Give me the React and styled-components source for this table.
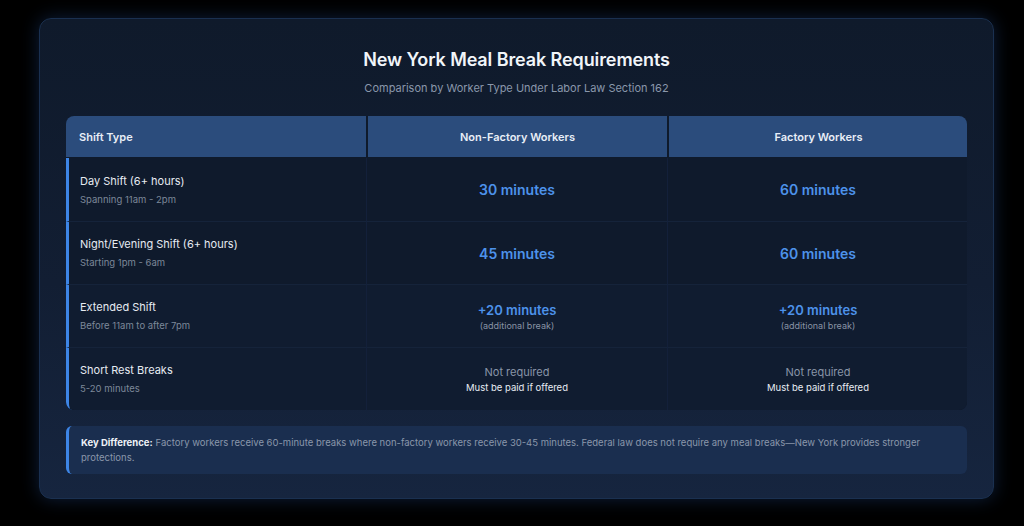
import React from "react";
import styled, { createGlobalStyle } from "styled-components";

const Global = createGlobalStyle`
  html, body { margin: 0; padding: 0; background: #000; }
  body { font-family: Inter, "Noto Sans", "Liberation Sans", sans-serif; -webkit-font-smoothing: antialiased; }
`;

const Page = styled.div`
  width: 1024px;
  height: 526px;
  background: #000;
  padding: 18px 30px 0 39px;
  box-sizing: border-box;
`;

const Card = styled.div`
  width: 955px;
  height: 481px;
  box-sizing: border-box;
  border-radius: 12px;
  border: 1px solid #1a3050;
  background: linear-gradient(180deg, #0f1a2b 0%, #121e33 55%, #16253f 100%);
  box-shadow: 0 0 18px rgba(40, 90, 170, 0.35);
  padding: 30px 26px 0 26px;
  display: flex;
  flex-direction: column;
`;

const Title = styled.h1`
  margin: 0;
  text-align: center;
  color: #f1f5f9;
  font-size: 18px;
  font-weight: 600;
  line-height: 22px;
  letter-spacing: -0.1px;
`;

const Subtitle = styled.p`
  margin: 10px 0 0;
  text-align: center;
  color: #8a97ab;
  font-size: 11px;
  line-height: 14px;
`;

const Table = styled.div`
  margin-top: 21px;
  display: grid;
  grid-template-columns: 300px 301px 301px;
  border-radius: 8px;
  overflow: hidden;
  background: #0e1829;
`;

const Head = styled.div`
  height: 41px;
  background: #2b4c7c;
  display: flex;
  align-items: center;
  justify-content: ${(p) => (p.$left ? "flex-start" : "center")};
  padding-left: ${(p) => (p.$left ? "13px" : "0")};
  color: #e8eef7;
  font-size: 11px;
  font-weight: 600;
  border-left: ${(p) => (p.$left ? "none" : "2px solid #0f1a2b")};
  border-bottom: 1px solid #0f1a2b;
`;

const Cell = styled.div`
  height: 63px;
  box-sizing: border-box;
  background: ${(p) => (p.$alt ? "#101c30" : "#0f1a2c")};
  border-top: ${(p) => (p.$first ? "none" : "1px solid #15233a")};
  border-left: ${(p) => (p.$lead ? "3px solid #3d85e6" : "1px solid #13203a")};
  border-bottom-left-radius: ${(p) => (p.$corner ? "6px" : "0")};
  display: flex;
  flex-direction: column;
  justify-content: center;
  align-items: ${(p) => (p.$lead ? "flex-start" : "center")};
  padding-left: ${(p) => (p.$lead ? "11px" : "0")};
`;

const RowTitle = styled.div`
  color: #e6ebf2;
  font-size: 11px;
  line-height: 14px;
`;

const RowSub = styled.div`
  margin-top: 6px;
  color: #7d8899;
  font-size: 9.5px;
  line-height: 12px;
`;

const Value = styled.div`
  color: #4d92ea;
  font-size: ${(p) => (p.$small ? "13px" : "14px")};
  font-weight: 600;
  line-height: 17px;
`;

const Note = styled.div`
  margin-top: 1px;
  color: #8893a5;
  font-size: 9px;
  line-height: 11px;
`;

const Muted = styled.div`
  color: #8995a8;
  font-size: 11px;
  line-height: 14px;
`;

const Paid = styled.div`
  margin-top: 3px;
  color: #e8edf4;
  font-size: 9.5px;
  line-height: 12px;
`;

const Callout = styled.div`
  margin-top: 16px;
  background: #1a2e4f;
  border-left: 3px solid #3d85e6;
  border-radius: 6px;
  padding: 9px 13px 9px 12px;
  color: #8a97ab;
  font-size: 9.5px;
  line-height: 15px;
`;

const Strong = styled.strong`
  color: #eef2f7;
  font-weight: 700;
  margin-right: 3px;
`;

const rows = [
  { t: "Day Shift (6+ hours)", s: "Spanning 11am - 2pm", a: { v: "30 minutes" }, b: { v: "60 minutes" } },
  { t: "Night/Evening Shift (6+ hours)", s: "Starting 1pm - 6am", a: { v: "45 minutes" }, b: { v: "60 minutes" } },
  { t: "Extended Shift", s: "Before 11am to after 7pm", a: { v: "+20 minutes", n: "(additional break)" }, b: { v: "+20 minutes", n: "(additional break)" } },
  { t: "Short Rest Breaks", s: "5-20 minutes", a: { muted: true }, b: { muted: true } },
];

function ValueCell({ d, first, alt }) {
  return (
    <Cell $first={first} $alt={alt}>
      {d.muted ? (
        <>
          <Muted>Not required</Muted>
          <Paid>Must be paid if offered</Paid>
        </>
      ) : (
        <>
          <Value $small={!!d.n}>{d.v}</Value>
          {d.n && <Note>{d.n}</Note>}
        </>
      )}
    </Cell>
  );
}

export default function App() {
  return (
    <>
      <Global />
      <Page>
        <Card>
          <Title>New York Meal Break Requirements</Title>
          <Subtitle>Comparison by Worker Type Under Labor Law Section 162</Subtitle>
          <Table>
            <Head $left>Shift Type</Head>
            <Head>Non-Factory Workers</Head>
            <Head>Factory Workers</Head>
            {rows.map((r, i) => (
              <React.Fragment key={r.t}>
                <Cell $lead $first={i === 0} $alt={i >= 2} $corner={i === rows.length - 1}>
                  <RowTitle>{r.t}</RowTitle>
                  <RowSub>{r.s}</RowSub>
                </Cell>
                <ValueCell d={r.a} first={i === 0} alt={i >= 2} />
                <ValueCell d={r.b} first={i === 0} alt={i >= 2} />
              </React.Fragment>
            ))}
          </Table>
          <Callout>
            <Strong>Key Difference:</Strong>Factory workers receive 60-minute breaks where non-factory workers receive 30-45 minutes. Federal law does not require any meal breaks—New York provides stronger protections.
          </Callout>
        </Card>
      </Page>
    </>
  );
}
